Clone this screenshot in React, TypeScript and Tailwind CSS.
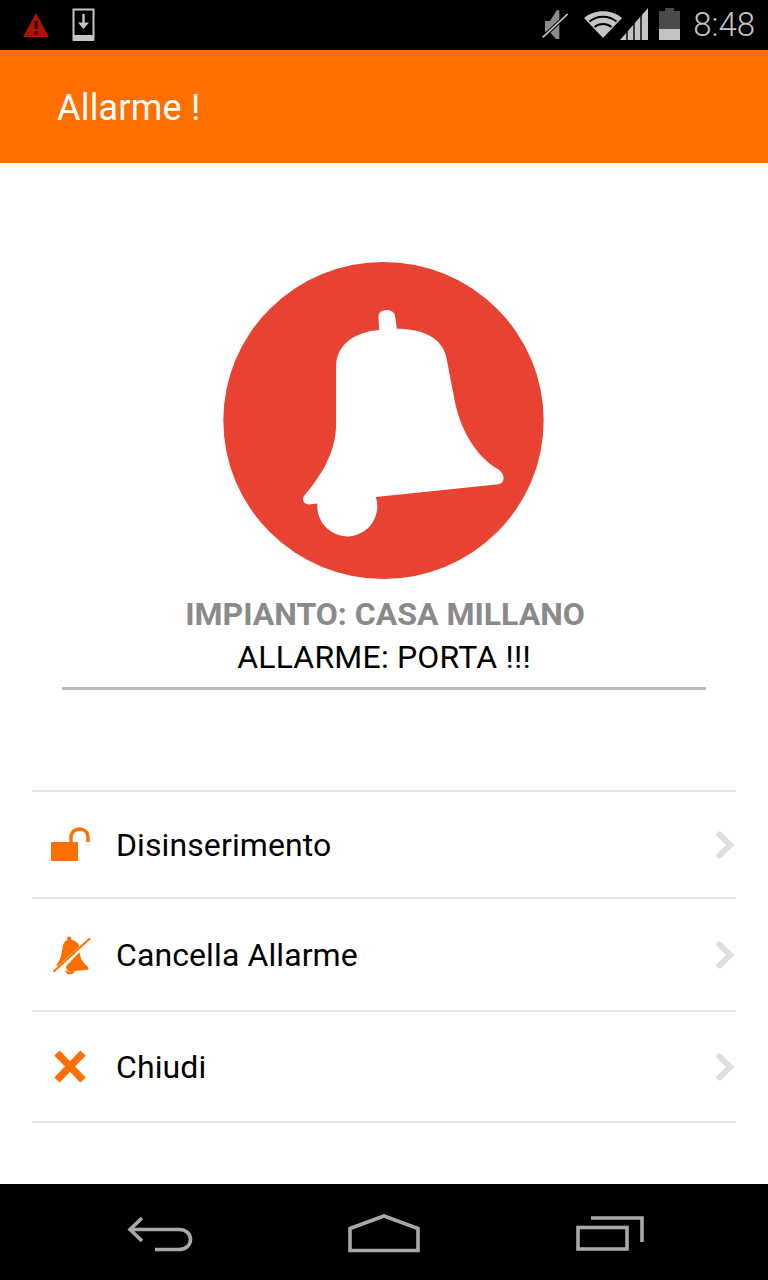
const orange = "#ff6f00";

function StatusLeft() {
  return (
    <div className="flex items-start pl-[23px]">
      <svg width="27" height="30" viewBox="0 0 27 30" className="mt-[4px]">
        <path d="M13 1L26 25H0Z" fill="#a81400" />
        <rect x="11.5" y="9" width="3.4" height="8" fill="#3a0a00" />
        <rect x="11.5" y="19" width="3.4" height="3.4" fill="#3a0a00" />
      </svg>
      <svg width="24" height="34" viewBox="0 0 24 34" className="ml-[22px]">
        <rect x="1.5" y="1.5" width="20" height="30" fill="none" stroke="#c4c4c4" strokeWidth="2" />
        <rect x="1" y="27" width="21" height="6" fill="#c4c4c4" />
        <path d="M11.5 6V19" stroke="#c4c4c4" strokeWidth="2.4" />
        <path d="M6 14.5L11.5 21L17 14.5Z" fill="#c4c4c4" />
      </svg>
    </div>
  );
}

function StatusRight() {
  return (
    <div className="flex items-center pr-[13px] pb-[2px]">
      {/* muted speaker, coordinates taken from the crop */}
      <svg width="26" height="31" viewBox="18 16 78 93">
        <path d="M27 52H42L62 20H70V106H60L42 86H27Z" fill="#8a8a8a" />
        <path d="M20 101L95 31" stroke="#000" strokeWidth="11" />
        <path d="M20 101L95 31" stroke="#c8c8c8" strokeWidth="5" />
      </svg>
      <svg width="40" height="28" viewBox="0 0 40 28" className="ml-[15px]">
        <path d="M1 8C11 -1 29 -1 39 8L20 28Z" fill="#c4c4c4" />
        <path d="M6.5 11.5C14 5 26 5 33.5 11.5M11.5 17C16.5 13 23.5 13 28.5 17" fill="none" stroke="#000" strokeWidth="2" />
      </svg>
      <svg width="28" height="32" viewBox="0 0 28 32" className="-ml-[3px]">
        <path d="M0 32L28 0V32Z" fill="#c4c4c4" />
        <path d="M7 32V20M14 32V14M21 32V6" stroke="#000" strokeWidth="1.4" />
      </svg>
      <svg width="21" height="32" viewBox="0 0 21 32" className="ml-[11px]">
        <rect x="6" y="0" width="9" height="3" fill="#4a4a4a" />
        <rect x="0" y="3" width="21" height="18" fill="#4a4a4a" />
        <rect x="0" y="21" width="21" height="11" fill="#c4c4c4" />
      </svg>
      <span className="ml-[13px] text-[33px] leading-none font-light text-[#c4c4c4]">8:48</span>
    </div>
  );
}

function BigBell() {
  return (
    <svg width="321" height="317" viewBox="40 36 960 950">
      <ellipse cx="520" cy="511" rx="480" ry="475" fill="#e84232" />
      <path
        fill="#fff"
        d="M507 240L505 200Q505 180 530 180Q552 180 555 200L560 236C635 236 695 262 708 320L735 460C755 550 805 625 865 658Q880 670 880 685Q878 700 865 702L497 740A90 90 0 1 1 322 760L295 763Q275 760 280 740C330 680 378 610 378 520L378 350C378 280 440 245 507 240Z"
      />
    </svg>
  );
}

function UnlockIcon() {
  return (
    <svg width="40" height="36" viewBox="0 0 40 36">
      <rect x="1" y="15" width="27" height="19" rx="1" fill={orange} />
      <path d="M21 15V11C21 5 25 2 29.5 2C34 2 38 5 38 11V15" fill="none" stroke={orange} strokeWidth="3.4" />
    </svg>
  );
}

function BellOffIcon() {
  return (
    <svg width="42" height="40" viewBox="15 15 125 120">
      <path d="M66 30L66 22Q72 17 77 22L79 30C90 31 99 38 103 49L38 108C34 109 32 106 36 102C46 90 50 72 52 54C53 42 58 33 66 30Z" fill={orange} />
      <path d="M103 67C105 84 112 98 128 110Q132 116 128 119L66 125L62 109Z" fill={orange} />
      <path d="M60 122C62 132 72 135 80 132C85 130 88 127 88 123Z" fill={orange} />
      <path d="M66 120C68 124 72 126 76 126" fill="none" stroke="#fff" strokeWidth="2.5" />
      <path d="M25 125L135 25" stroke={orange} strokeWidth="6" />
    </svg>
  );
}

function CloseIcon() {
  return (
    <svg width="40" height="34" viewBox="0 0 40 34">
      <path d="M7 3L33 30M33 3L7 30" stroke={orange} strokeWidth="7.5" />
    </svg>
  );
}

function RowArrow() {
  return (
    <svg width="18" height="28" viewBox="0 0 18 28">
      <path d="M3.5 3.5L14 14L3.5 24.5" fill="none" stroke="#dedede" strokeWidth="6" strokeLinecap="round" />
    </svg>
  );
}

const rows = [
  { label: "Disinserimento", icon: <UnlockIcon />, h: "h-[107px]" },
  { label: "Cancella Allarme", icon: <BellOffIcon />, h: "h-[113px]" },
  { label: "Chiudi", icon: <CloseIcon />, h: "h-[111px]" },
];

function BackIcon() {
  return (
    <svg width="66" height="36" viewBox="0 0 66 36">
      <path d="M15 2L3 13.5L15 25M3 13.5H52C59 13.5 63.5 18 63.5 23.5C63.5 29 59 33.5 52 33.5H28" fill="none" stroke="#a8a8a8" strokeWidth="3.6" />
    </svg>
  );
}

function HomeIcon() {
  return (
    <svg width="72" height="40" viewBox="0 0 72 40">
      <path d="M2 14.5L36 2L70 14.5V36.5H2Z" fill="none" stroke="#a8a8a8" strokeWidth="3.6" />
    </svg>
  );
}

function RecentsIcon() {
  return (
    <svg width="68" height="36" viewBox="0 0 68 36">
      <rect x="2" y="11.5" width="49" height="21.5" fill="none" stroke="#a8a8a8" strokeWidth="3.6" />
      <path d="M15 2H66V26" fill="none" stroke="#a8a8a8" strokeWidth="3.6" />
    </svg>
  );
}

export default function App() {
  return (
    <div className="flex h-[1280px] w-[768px] flex-col overflow-hidden bg-white font-['Roboto',sans-serif]">
      <div className="flex h-[50px] items-center justify-between bg-black">
        <StatusLeft />
        <StatusRight />
      </div>

      <div className="flex h-[113px] items-center bg-[#ff6f00] pt-[3px] pl-[57px] text-[36px] tracking-[0.2px] text-white">
        Allarme !
      </div>

      <div className="flex flex-1 flex-col">
        <div className="flex flex-col items-center pt-[99px]">
          <div className="-ml-[2px]">
            <BigBell />
          </div>
          <div className="mt-[17px] ml-[2px] text-[32px] leading-[36px] font-bold text-[#8a8a8a]">
            IMPIANTO: CASA MILLANO
          </div>
          <div className="mt-[7px] text-[32px] leading-[36px] tracking-[0.2px] text-black">ALLARME: PORTA !!!</div>
        </div>
        <div className="mx-[62px] mt-[12px] h-[3px] bg-[#bdbdbd]" />

        <div className="mx-[32px] mt-[100px] flex flex-col border-t-2 border-[#e6e6e6]">
          {rows.map(r => (
            <div key={r.label} className={`flex items-center border-b-2 border-[#e6e6e6] ${r.h}`}>
              <div className="ml-[18px] flex w-[66px] shrink-0">{r.icon}</div>
              <span className="flex-1 pt-[1px] text-[32px] tracking-[0.1px] text-black">{r.label}</span>
              <div className="mr-[2px] flex">
                <RowArrow />
              </div>
            </div>
          ))}
        </div>
      </div>

      <div className="flex h-[96px] items-center bg-black pt-[4px]">
        <div className="ml-[127px]"><BackIcon /></div>
        <div className="ml-[155px]"><HomeIcon /></div>
        <div className="ml-[156px]"><RecentsIcon /></div>
      </div>
    </div>
  );
}
